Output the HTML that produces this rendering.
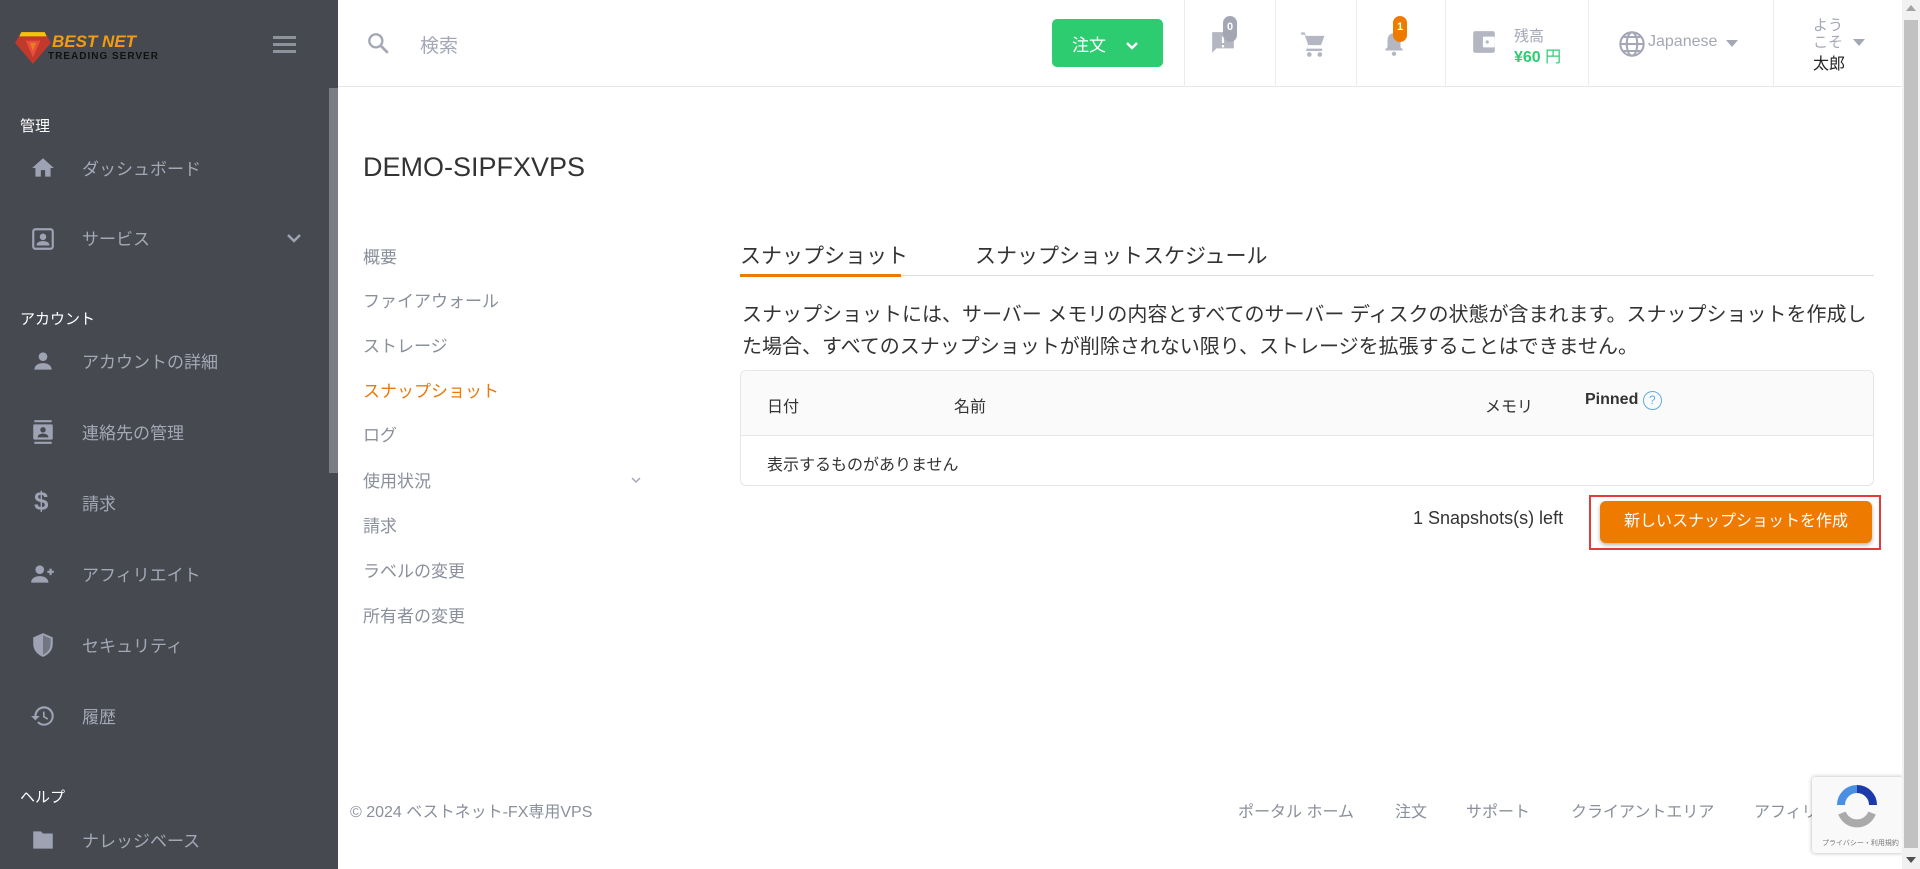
<!DOCTYPE html>
<html><head><meta charset="utf-8">
<style>
*{box-sizing:border-box;margin:0;padding:0}
body{width:1920px;height:869px;overflow:hidden;background:#fff;font-family:"Liberation Sans","Noto Sans CJK JP",sans-serif;position:relative;color:#333}
.sb{position:absolute;left:0;top:0;width:338px;height:869px;background:#464950}
.sbthumb{position:absolute;left:329px;top:88px;width:9px;height:385px;background:#7a7d86}
.lbl{position:absolute;left:20px;color:#fff;font-size:15px}
.it{position:absolute;left:82px;color:#a4a8b6;font-size:17px}
.ic{position:absolute;left:30px;width:26px;height:26px}
.a{position:absolute;white-space:nowrap}
.hdr{position:absolute;left:338px;top:0;width:1564px;height:87px;border-bottom:1px solid #e6e6e6;background:#fff}
.dv{position:absolute;top:0;width:1px;height:87px;background:#ececec}
.sub{position:absolute;left:363px;font-size:17px;color:#8a8f9c}
.ft{position:absolute;top:798px;font-size:16px;color:#8a8f9c}
</style></head><body>
<div class="sb">
 <svg style="position:absolute;left:15px;top:32px" width="36" height="32" viewBox="0 0 34 30"><polygon points="6,0 28,0 34,10 17,30 0,10" fill="#c0392b"/><polygon points="6,0 28,0 30,4 4,4" fill="#f1c40f"/><polygon points="10,8 24,8 17,24" fill="#e74c3c"/><polygon points="14,10 20,10 17,18" fill="#e67e22"/></svg>
 <div class="a" style="left:52px;top:32px;color:#f39c12;font-weight:bold;font-style:italic;font-size:17px">BEST NET</div>
 <div class="a" style="left:48px;top:51px;color:#111;font-weight:bold;font-size:10px;letter-spacing:1px">TREADING SERVER</div>
 <div style="position:absolute;left:273px;top:36px;width:23px;height:3px;background:#8e929d;box-shadow:0 7px 0 #8e929d,0 14px 0 #8e929d"></div>
 <div class="sbthumb"></div>
 <div class="lbl" style="top:115px">管理</div>
 <svg class="ic" style="top:155px" viewBox="0 0 24 24"><path d="M10 20v-6h4v6h5v-8h3L12 3 2 12h3v8z" fill="#9ea3b4"/></svg>
 <div class="it" style="top:155px">ダッシュボード</div>
 <svg class="ic" style="top:226px" viewBox="0 0 24 24"><rect x="3" y="3" width="18" height="18" rx="2" fill="none" stroke="#9ea3b4" stroke-width="2"/><circle cx="12" cy="10" r="3" fill="#9ea3b4"/><path d="M6 18c0-3 3-4 6-4s6 1 6 4z" fill="#9ea3b4"/></svg>
 <div class="it" style="top:225px">サービス</div>
 <svg style="position:absolute;left:286px;top:232px" width="16" height="12" viewBox="0 0 16 12"><path d="M2 3l6 6 6-6" fill="none" stroke="#9ea3b4" stroke-width="2.5"/></svg>
 <div class="lbl" style="top:308px">アカウント</div>
 <svg class="ic" style="top:348px" viewBox="0 0 24 24"><circle cx="12" cy="8" r="4" fill="#9ea3b4"/><path d="M4 20c0-4 4-6 8-6s8 2 8 6z" fill="#9ea3b4"/></svg>
 <div class="it" style="top:348px">アカウントの詳細</div>
 <svg class="ic" style="top:419px" viewBox="0 0 24 24"><path d="M4 1h16v2H4zM4 21h16v2H4z" fill="#9ea3b4"/><rect x="3" y="5" width="18" height="14" rx="1" fill="#9ea3b4"/><circle cx="12" cy="10" r="2.5" fill="#464950"/><path d="M7 17c0-2.5 2.5-3.5 5-3.5s5 1 5 3.5z" fill="#464950"/></svg>
 <div class="it" style="top:419px">連絡先の管理</div>
 <div class="a" style="left:34px;top:486px;color:#9ea3b4;font-size:26px;font-weight:bold">$</div>
 <div class="it" style="top:490px">請求</div>
 <svg class="ic" style="top:561px" viewBox="0 0 24 24"><circle cx="9" cy="8" r="4" fill="#9ea3b4"/><path d="M1 20c0-4 4-6 8-6s8 2 8 6z" fill="#9ea3b4"/><path d="M19 7v6M16 10h6" stroke="#9ea3b4" stroke-width="2"/></svg>
 <div class="it" style="top:561px">アフィリエイト</div>
 <svg class="ic" style="top:632px" viewBox="0 0 24 24"><path d="M12 1L3 5v6c0 6 4 10 9 12 5-2 9-6 9-12V5z" fill="#9ea3b4"/><path d="M12 3v18c4-2 7-5 7-10V6z" fill="#464950" opacity=".5"/></svg>
 <div class="it" style="top:632px">セキュリティ</div>
 <svg class="ic" style="top:703px" viewBox="0 0 24 24"><path d="M13 3a9 9 0 0 0-9 9H1l4 4 4-4H6a7 7 0 1 1 2 5l-1.4 1.4A9 9 0 1 0 13 3zm-1 5v5l4 2.5.8-1.3-3.3-2V8z" fill="#9ea3b4"/></svg>
 <div class="it" style="top:703px">履歴</div>
 <div class="lbl" style="top:786px">ヘルプ</div>
 <svg class="ic" style="top:827px" viewBox="0 0 24 24"><path d="M3 4h7l2 2h9v14H3z" fill="#9ea3b4"/></svg>
 <div class="it" style="top:827px">ナレッジベース</div>
</div>

<div class="hdr">
 <svg style="position:absolute;left:27px;top:30px" width="26" height="26" viewBox="0 0 24 24"><circle cx="10" cy="10" r="6" fill="none" stroke="#a4a8b6" stroke-width="2.2"/><path d="M14.5 14.5L21 21" stroke="#a4a8b6" stroke-width="2.5"/></svg>
 <div class="a" style="left:82px;top:31px;font-size:19px;color:#a4a8b6">検索</div>
 <div style="position:absolute;left:714px;top:19px;width:111px;height:48px;background:#2ecc71;border-radius:5px;color:#fff;font-size:17px;padding:12px 0 0 20px">注文 <svg style="margin-left:14px" width="14" height="10" viewBox="0 0 14 10"><path d="M2 2l5 5 5-5" fill="none" stroke="#fff" stroke-width="2.5"/></svg></div>
 <div class="dv" style="left:846px"></div><div class="dv" style="left:937px"></div><div class="dv" style="left:1018px"></div><div class="dv" style="left:1107px"></div><div class="dv" style="left:1250px"></div><div class="dv" style="left:1435px"></div>
 <svg style="position:absolute;left:872px;top:30px" width="26" height="26" viewBox="0 0 24 24"><path d="M2 2h20v15H6l-4 4z" fill="#b4b7c2"/><path d="M11 6h2v6h-2zm0 8h2v2h-2z" fill="#fff"/></svg>
 <div style="position:absolute;left:885px;top:16px;width:14px;height:26px;background:#a4a7b3;border-radius:7px;color:#fff;font-size:11px;font-weight:bold;text-align:center;line-height:22px">0</div>
 <svg style="position:absolute;left:962px;top:30px" width="28" height="28" viewBox="0 0 24 24"><path d="M1 2h3l1 3h16l-3 8H7l-1 3h13v2H5l2-5L4 4H1z" fill="#b4b7c2"/><circle cx="8" cy="21" r="2" fill="#b4b7c2"/><circle cx="17" cy="21" r="2" fill="#b4b7c2"/></svg>
 <svg style="position:absolute;left:1043px;top:30px" width="26" height="28" viewBox="0 0 24 24"><path d="M12 2c-4 0-6 3-6 7v6l-2 2v1h16v-1l-2-2V9c0-4-2-7-6-7z" fill="#b4b7c2"/><circle cx="12" cy="21" r="2" fill="#b4b7c2"/></svg>
 <div style="position:absolute;left:1055px;top:16px;width:14px;height:26px;background:#ef7a00;border-radius:7px;color:#fff;font-size:11px;font-weight:bold;text-align:center;line-height:22px">1</div>
 <svg style="position:absolute;left:1133px;top:29px" width="26" height="26" viewBox="0 0 24 24"><rect x="2" y="2" width="20" height="20" rx="2" fill="#b4b7c2"/><rect x="11" y="7" width="11" height="10" rx="1" fill="#fff"/><circle cx="15" cy="12" r="1.5" fill="#b4b7c2"/></svg>
 <div class="a" style="left:1176px;top:25px;font-size:15px;color:#a4a8b6">残高</div>
 <div class="a" style="left:1176px;top:43px;font-size:16px;color:#2ecc71;font-weight:bold">¥60 <span style="font-weight:normal">円</span></div>
 <svg style="position:absolute;left:1280px;top:30px" width="28" height="28" viewBox="0 0 24 24" fill="none" stroke="#a4a8b6" stroke-width="1.8"><circle cx="12" cy="12" r="10"/><ellipse cx="12" cy="12" rx="4.5" ry="10"/><path d="M2 12h20M4 6h16M4 18h16"/></svg>
 <div class="a" style="left:1310px;top:33px;font-size:16px;color:#a4a8b6">Japanese</div>
 <div style="position:absolute;left:1388px;top:40px;border:6px solid transparent;border-top:7px solid #a4a8b6"></div>
 <div class="a" style="left:1475px;top:17px;font-size:15px;color:#a4a8b6;line-height:17px">よう<br>こそ</div>
 <div style="position:absolute;left:1515px;top:39px;border:6px solid transparent;border-top:7px solid #a4a8b6"></div>
 <div class="a" style="left:1475px;top:50px;font-size:16px;color:#222">太郎</div>
</div>

<div class="a" style="left:363px;top:152px;font-size:27px;color:#333">DEMO-SIPFXVPS</div>
<div class="sub" style="top:243px">概要</div>
<div class="sub" style="top:287px">ファイアウォール</div>
<div class="sub" style="top:332px">ストレージ</div>
<div class="sub" style="top:377px;color:#e8790b">スナップショット</div>
<div class="sub" style="top:421px">ログ</div>
<div class="sub" style="top:467px">使用状況</div>
<svg style="position:absolute;left:630px;top:476px" width="12" height="8" viewBox="0 0 12 8"><path d="M2 2l4 4 4-4" fill="none" stroke="#a4a8b6" stroke-width="1.5"/></svg>
<div class="sub" style="top:512px">請求</div>
<div class="sub" style="top:557px">ラベルの変更</div>
<div class="sub" style="top:602px">所有者の変更</div>

<div class="a" style="left:740px;top:240px;font-size:21px;color:#333">スナップショット</div>
<div class="a" style="left:975px;top:240px;font-size:21px;color:#333">スナップショットスケジュール</div>
<div style="position:absolute;left:740px;top:275px;width:1134px;height:1px;background:#ddd"></div>
<div style="position:absolute;left:740px;top:274px;width:161px;height:3px;background:#ef7a00"></div>
<div style="position:absolute;left:742px;top:299px;width:1125px;font-size:20px;line-height:32px;color:#333">スナップショットには、サーバー メモリの内容とすべてのサーバー ディスクの状態が含まれます。スナップショットを作成した場合、すべてのスナップショットが削除されない限り、ストレージを拡張することはできません。</div>
<div style="position:absolute;left:740px;top:370px;width:1134px;height:116px;border:1px solid #e6e6e6;border-radius:6px;overflow:hidden">
 <div style="height:65px;background:#fafafa;border-bottom:1px solid #e6e6e6;position:relative;font-size:16px">
  <div class="a" style="left:26px;top:22px">日付</div><div class="a" style="left:213px;top:22px">名前</div><div class="a" style="left:744px;top:22px">メモリ</div>
  <div class="a" style="left:844px;top:20px;font-weight:bold">Pinned <span style="display:inline-block;width:19px;height:19px;border:1.5px solid #5dade2;border-radius:50%;color:#5dade2;font-size:12px;text-align:center;line-height:16px;font-weight:normal">?</span></div>
 </div>
 <div class="a" style="left:26px;top:80px;font-size:16px">表示するものがありません</div>
</div>
<div class="a" style="left:1413px;top:508px;font-size:18px;color:#333">1 Snapshots(s) left</div>
<div style="position:absolute;left:1589px;top:495px;width:292px;height:55px;border:2px solid #e53a3a"></div>
<div style="position:absolute;left:1600px;top:501px;width:272px;height:42px;background:#ef7a00;border-radius:6px;color:#fff;font-size:16px;text-align:center;line-height:42px;box-shadow:0 2px 4px rgba(0,0,0,.3)">新しいスナップショットを作成</div>

<div class="ft" style="left:350px">© 2024 ベストネット-FX専用VPS</div>
<div class="ft" style="left:1238px">ポータル ホーム</div>
<div class="ft" style="left:1395px">注文</div>
<div class="ft" style="left:1466px">サポート</div>
<div class="ft" style="left:1571px">クライアントエリア</div>
<div class="ft" style="left:1754px">アフィリエイト</div>
<div style="position:absolute;left:1812px;top:777px;width:92px;height:76px;background:#f9f9f9;border-radius:3px;box-shadow:0 0 4px rgba(0,0,0,.3)">
 <svg style="position:absolute;left:22px;top:6px" width="46" height="46" viewBox="0 0 46 46"><path d="M8 30a16 16 0 0 0 30 0" stroke="#aaa" stroke-width="8" fill="none"/><path d="M23 6a16 16 0 0 1 16 16" stroke="#1c3aa9" stroke-width="8" fill="none"/><path d="M7 22A16 16 0 0 1 23 6" stroke="#4a90e2" stroke-width="8" fill="none"/></svg>
 <div class="a" style="left:10px;top:61px;font-size:7px;color:#777">プライバシー・利用規約</div>
</div>
<div style="position:absolute;left:1902px;top:0;width:18px;height:869px;background:#f1f1f1"></div>
<div style="position:absolute;left:1904px;top:20px;width:14px;height:828px;background:#c1c1c1"></div>
<div style="position:absolute;left:1906px;top:5px;border:5px solid transparent;border-bottom:6px solid #a3a3a3;border-top:0"></div>
<div style="position:absolute;left:1906px;top:857px;border:5px solid transparent;border-top:6px solid #505050;border-bottom:0"></div>
</body></html>
